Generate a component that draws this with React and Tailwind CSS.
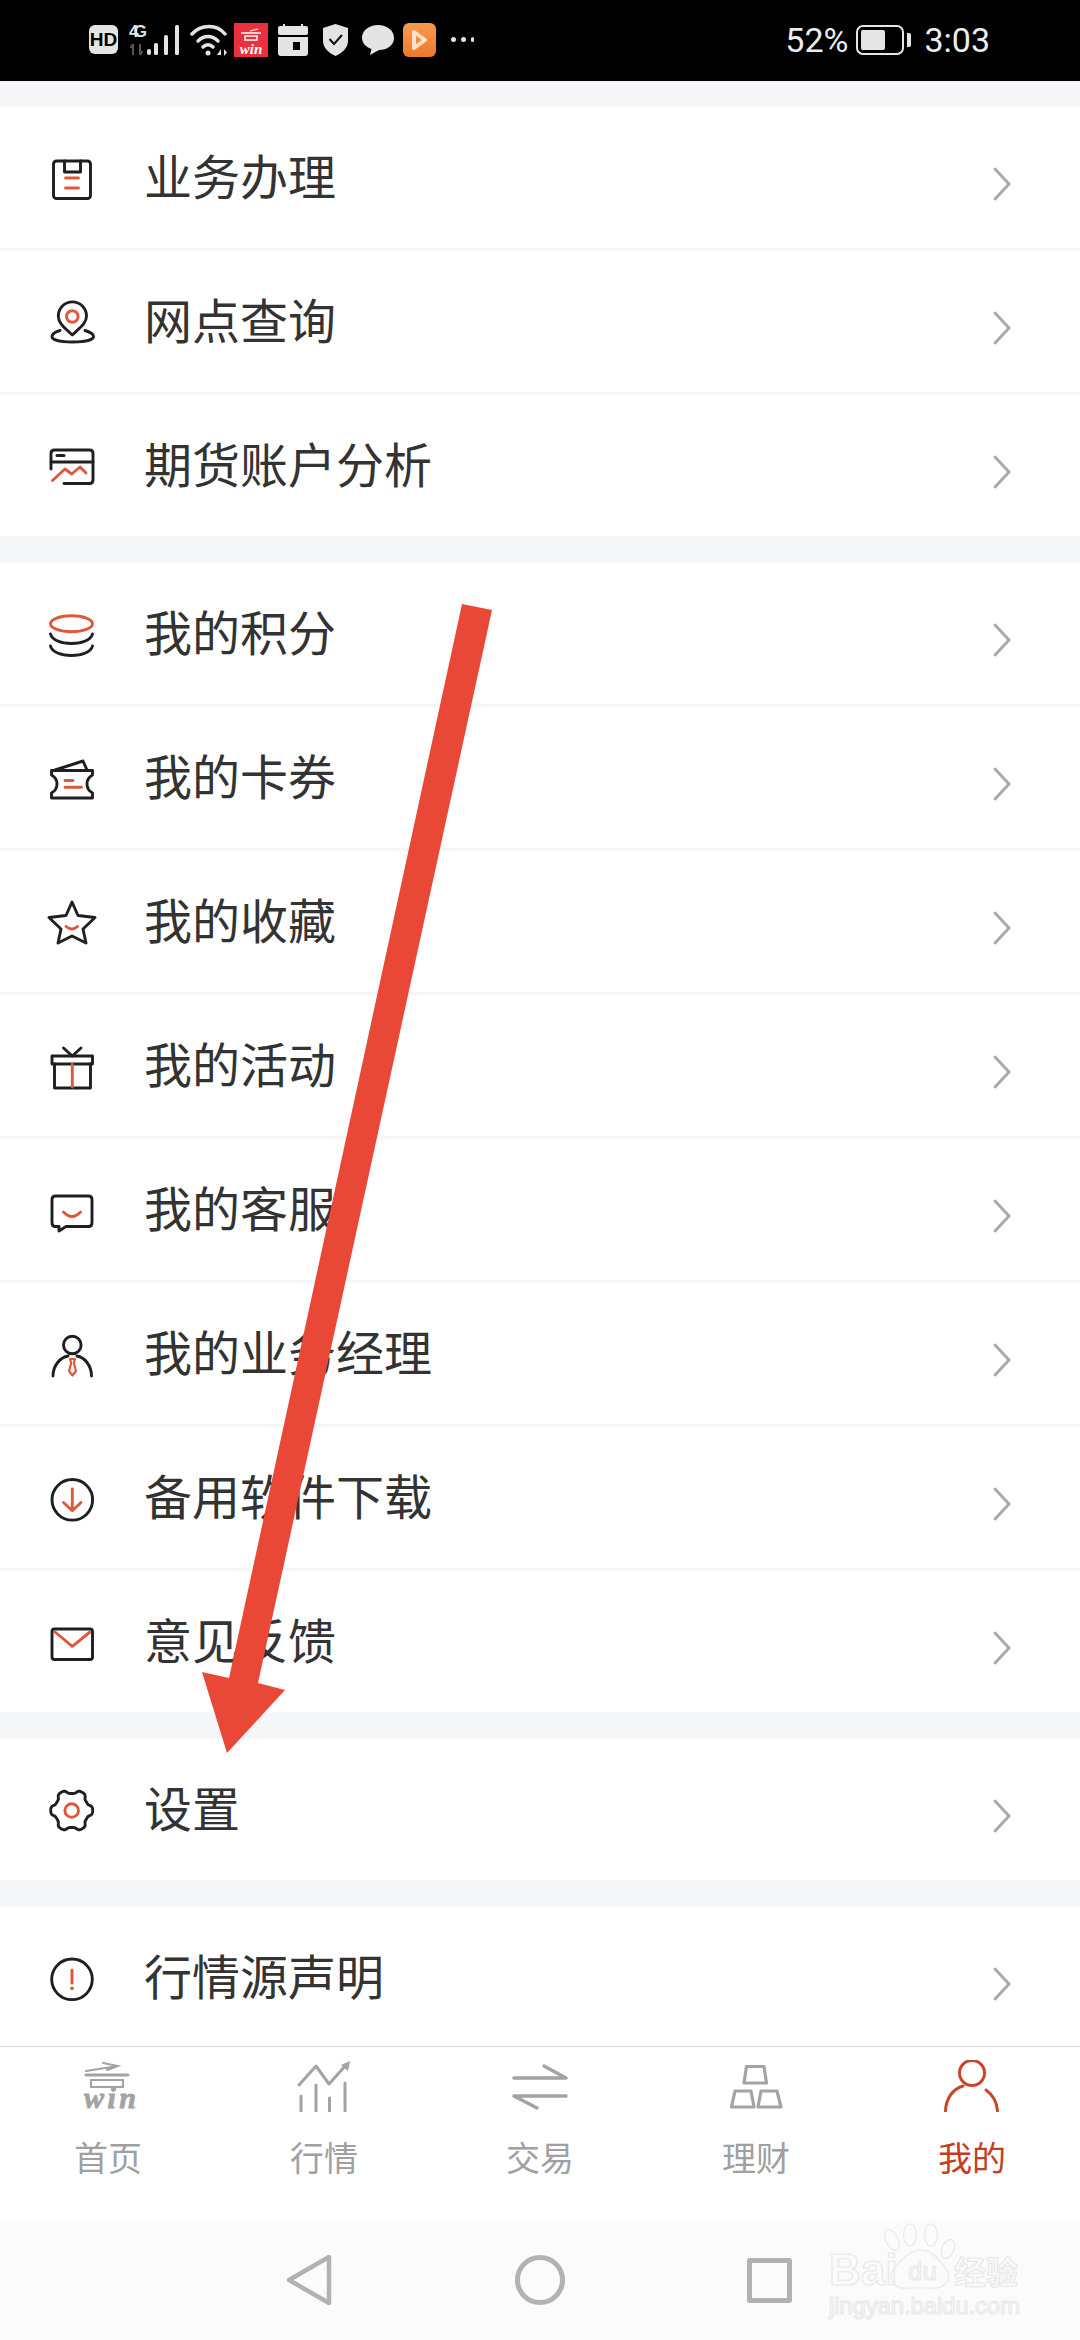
import React from 'react';

const INK = '#1f1f1f';
const RED = '#e0583c';

const Icon = ({ children }) => (
    <svg width="50" height="50" viewBox="0 0 50 50" fill="none" stroke={INK} strokeWidth="2.900" strokeLinecap="round" strokeLinejoin="round">
        {children}
    </svg>
);

// six squared-off teeth, notch at the top like the reference
const gearPath = (() => {
    const pts = [];
    for (let i = 0; i < 180; i++) {
        const t = (i / 180) * Math.PI * 2;
        const r = 19 + 2 * (Math.tanh(1.8 * Math.cos(6 * t)) / Math.tanh(1.8));
        pts.push(`${(24.7 + r * Math.cos(t)).toFixed(2)} ${(25.5 + r * Math.sin(t)).toFixed(2)}`);
    }
    return 'M' + pts.join('L') + 'Z';
})();

const icons = {
    clipboard: (
        <Icon>
            <rect x="6.500" y="8" width="37" height="37.500" rx="3" />
            <path d="M17.500 8v11h16V8" />
            <path d="M18.500 25h13M18.500 35h13" stroke={RED} />
        </Icon>
    ),
    pin: (
        <Icon>
            <path d="M25.300 38C18 31 11.300 26.500 11.300 19A14 14 0 0 1 39.500 19C39.500 26.500 32.500 31 25.300 38Z" />
            <circle cx="25.300" cy="19.500" r="5.800" stroke={RED} />
            <path d="M13 33.500C8 35 5 37 5 39.500C5 43 14 45 25.500 45C37 45 46.500 43 46.500 39.500C46.500 37 43 35 38 33.500" />
        </Icon>
    ),
    card: (
        <Icon>
            <path d="M4 28V12.500Q4 9 7.500 9H42.500Q46 9 46 12.500V39Q46 42.500 42.500 42.500H17" />
            <path d="M4 21H46" />
            <path d="M10 14.500H17" strokeWidth="3" />
            <path d="M5.500 39.500L18 28L24.700 33L33 26L39 32" stroke={RED} />
        </Icon>
    ),
    coins: (
        <Icon>
            <ellipse cx="24.500" cy="14.700" rx="21" ry="8" stroke={RED} />
            <path d="M3.500 25C5 31 14 34.500 24.500 34.500C35 34.500 44 31 45.500 25" />
            <path d="M3.500 37C5 43 14 46.500 24.500 46.500C35 46.500 44 43 45.500 37" />
        </Icon>
    ),
    ticket: (
        <Icon>
            <path d="M4.500 17.500H45.500V22Q40 25 40 31Q40 37 45.500 40V45H4.500V40Q10 37 10 31Q10 25 4.500 22Z" />
            <path d="M8 17L36 8L40 17" />
            <path d="M18 27.500H26M18 34.300H34.500" stroke={RED} />
        </Icon>
    ),
    star: (
        <Icon>
            <path d="M25 5L31 18.500L48 20.500L36 32L39 46L25 39L11 46L14 32L2 20.500L19 18.500Z" />
            <path d="M19 29.500Q25 34.500 30.500 29.500" stroke={RED} />
        </Icon>
    ),
    gift: (
        <Icon>
            <path d="M5 15H45.500V23H5Z" />
            <path d="M7.500 23V47H43.500V23" />
            <path d="M16.500 7L25.300 15L34 7" />
            <path d="M25.300 23V46" stroke={RED} />
        </Icon>
    ),
    chat: (
        <Icon>
            <path d="M8.500 11H41.500Q45 11 45 14.500V38Q45 41.500 41.500 41.500H19L12 46V41.500H8.500Q5 41.500 5 38V14.500Q5 11 8.500 11Z" />
            <path d="M16.500 27Q25 36 33.500 27" stroke={RED} />
        </Icon>
    ),
    manager: (
        <Icon>
            <circle cx="25.300" cy="16" r="8.800" />
            <path d="M6 47C6 36 14 28 21 27M44.500 47C44.500 36 37 28 30 27" />
            <path d="M23 30H28L26.800 34L29 42L25.500 46.500L22 42L24.200 34Z" stroke={RED} strokeWidth="2.200" />
        </Icon>
    ),
    download: (
        <Icon>
            <circle cx="25.300" cy="26.800" r="20.300" />
            <path d="M25.300 16V37.500M16.500 29.500L25.300 37.800L34 29.500" stroke={RED} />
        </Icon>
    ),
    mail: (
        <Icon>
            <rect x="5" y="12" width="40.500" height="30.500" rx="2.500" />
            <path d="M8 15L25.300 29.300L43 15" stroke={RED} />
        </Icon>
    ),
    gear: (
        <Icon>
            <path d={gearPath} />
            <circle cx="24.700" cy="25.500" r="6.800" stroke={RED} />
        </Icon>
    ),
    warn: (
        <Icon>
            <circle cx="25" cy="26.300" r="20.300" />
            <path d="M25 17V30" stroke={RED} strokeWidth="3" />
            <path d="M25 35.200V35.400" stroke={RED} strokeWidth="3.600" />
        </Icon>
    ),
};

const groups = [
    [
        { icon: 'clipboard', label: '业务办理' },
        { icon: 'pin', label: '网点查询' },
        { icon: 'card', label: '期货账户分析' },
    ],
    [
        { icon: 'coins', label: '我的积分' },
        { icon: 'ticket', label: '我的卡券' },
        { icon: 'star', label: '我的收藏' },
        { icon: 'gift', label: '我的活动' },
        { icon: 'chat', label: '我的客服' },
        { icon: 'manager', label: '我的业务经理' },
        { icon: 'download', label: '备用软件下载' },
        { icon: 'mail', label: '意见反馈' },
    ],
    [{ icon: 'gear', label: '设置' }],
    [{ icon: 'warn', label: '行情源声明' }],
];

const Row = ({ icon, label }) => (
    <div className="flex items-center h-[141px] bg-white pl-[47px]">
        <div className="w-[50px] h-[50px]">{icons[icon]}</div>
        <span className="ml-[47px] mb-[7px] text-[48px] leading-none text-[#333333]">{label}</span>
        <svg className="ml-auto mr-[68px] mt-[13px]" width="20" height="36" viewBox="0 0 20 36" fill="none" stroke="#a8a8a8" strokeWidth="3" strokeLinecap="round" strokeLinejoin="round">
            <path d="M3 3L17 18L3 33" />
        </svg>
    </div>
);

const TAB = '#a3a3a3';

const tabs = [
    {
        label: '首页',
        icon: (
            <svg width="56" height="52" viewBox="0 0 56 52" fill="none" stroke={TAB} strokeWidth="2.500" strokeLinecap="round" className="overflow-visible">
                <path d="M6 11L38 6M23 3L38 6L27 10" strokeWidth="2" />
                <path d="M6 15H48" strokeWidth="3" />
                <rect x="11" y="20" width="32" height="7" strokeWidth="2" />
                <text x="4" y="48" fontFamily="Liberation Serif, serif" fontStyle="italic" fontWeight="700" fontSize="30" fill={TAB} stroke={TAB} strokeWidth="0.800" textLength="52">win</text>
            </svg>
        ),
    },
    {
        label: '行情',
        icon: (
            <svg width="56" height="52" viewBox="0 0 56 52" fill="none" stroke={TAB} strokeWidth="3" strokeLinecap="round" strokeLinejoin="round">
                <path d="M3 25L20 6L33 24L50 5" />
                <path d="M54 1L52 11L45 5Z" fill={TAB} stroke="none" />
                <path d="M5 36V51M20 25V51M33.500 38V51M49 23V51" />
            </svg>
        ),
    },
    {
        label: '交易',
        icon: (
            <svg width="56" height="52" viewBox="0 0 56 52" fill="none" stroke={TAB} strokeWidth="3.500" strokeLinecap="round" strokeLinejoin="round">
                <path d="M2 18H54L32 6" />
                <path d="M54 36H2L25 48" />
            </svg>
        ),
    },
    {
        label: '理财',
        icon: (
            <svg width="56" height="52" viewBox="0 0 56 52" fill="none" stroke={TAB} strokeWidth="3.200" strokeLinecap="round" strokeLinejoin="round">
                <path d="M18.500 6.500H36L38.500 23H16Z" />
                <path d="M7 31H23L26 47H3.500Z" />
                <path d="M33 31H49L53 47H30Z" />
            </svg>
        ),
    },
    {
        label: '我的',
        active: true,
        icon: (
            <svg width="56" height="52" viewBox="0 0 56 52" fill="none" stroke="#c9452a" strokeWidth="3" strokeLinecap="round">
                <circle cx="28" cy="13" r="12.500" />
                <path d="M1.500 51C2 38 9 29 19 26M42 30C49 35 53 43 53.500 51" />
            </svg>
        ),
    },
];

const StatusLeft = () => (
    <div className="flex items-center h-[81px] pl-[89px] pb-[2px]">
        {/* HD */}
        <div className="flex items-center justify-center w-[29px] h-[29px] rounded-[6px] bg-[#e4e4e4] text-black text-[19px] font-bold leading-none font-['Liberation_Sans',sans-serif]">HD</div>
        {/* 4G signal */}
        <svg className="ml-[11px]" width="52" height="34" viewBox="0 0 52 34" fill="#e4e4e4">
            <text x="0" y="14" fontFamily="Liberation Sans, sans-serif" fontWeight="700" fontSize="17" textLength="18">4G</text>
            <path d="M4 32V21M4 21L1.500 25M11 21V32M11 32L13.500 28" stroke="#555555" strokeWidth="2" fill="none" />
            <rect x="18" y="26" width="4" height="6" rx="2" />
            <rect x="25" y="20" width="4" height="12" rx="1.500" />
            <rect x="35" y="12" width="4" height="20" rx="1.500" />
            <rect x="46" y="2" width="4" height="30" rx="1.500" />
        </svg>
        {/* wifi */}
        <svg className="ml-[9px]" width="38" height="34" viewBox="0 0 38 34" fill="none" stroke="#e4e4e4" strokeWidth="3.500" strokeLinecap="round">
            <path d="M2 11C11 1 27 1 35 11" />
            <path d="M8 18C14 12 22 12 28 18" />
            <path d="M13 24C16 21 20 21 23 24" />
            <circle cx="18" cy="30" r="2.500" fill="#e4e4e4" stroke="none" />
            <path d="M27 32L31 26V32ZM34 26V33L37 29.500Z" fill="#e4e4e4" stroke="none" />
        </svg>
        {/* app icon */}
        <div className="ml-[6px] w-[34px] h-[34px] bg-[#e8303f] flex flex-col items-center justify-end pb-[1px]">
            <svg width="26" height="15" viewBox="0 0 26 15" fill="none" stroke="#ffffff" strokeWidth="1.500">
                <path d="M3 6H23M7 9H19V13H7Z" />
                <path d="M12 4L20 2" stroke="#ffd0a0" />
            </svg>
            <span className="text-white text-[15px] leading-[14px] font-bold italic font-['Liberation_Serif',serif]">win</span>
        </div>
        {/* calendar */}
        <svg className="ml-[10px]" width="30" height="32" viewBox="0 0 30 32" fill="#e4e4e4">
            <rect x="0" y="2" width="30" height="9" rx="2" />
            <rect x="5" y="0" width="2" height="4" />
            <rect x="23" y="0" width="2" height="4" />
            <path d="M0 13H30V29Q30 32 27 32H3Q0 32 0 29ZM15 18V26H22V18Z" fillRule="evenodd" />
        </svg>
        {/* shield */}
        <svg className="ml-[15px]" width="25" height="32" viewBox="0 0 25 32" fill="#e4e4e4">
            <path d="M12.500 0L25 4V17C25 24 19 29 12.500 32C6 29 0 24 0 17V4Z" />
            <path d="M6.500 15L11 20L19 11" fill="none" stroke="#111111" strokeWidth="2" />
        </svg>
        {/* bubble */}
        <svg className="ml-[14px]" width="32" height="30" viewBox="0 0 32 30" fill="#e4e4e4">
            <path d="M16 0C25 0 32 5.500 32 13C32 20.500 25 25 17 25L8 30L9.500 24C4 22 0 18 0 13C0 5.500 7 0 16 0Z" />
        </svg>
        {/* player */}
        <div className="ml-[9px] w-[33px] h-[34px] rounded-[6px] bg-gradient-to-b from-[#f79a4e] to-[#ec7a28] flex items-center justify-center">
            <svg width="18" height="22" viewBox="0 0 18 22" fill="none" stroke="#fde0c8" strokeWidth="4" strokeLinejoin="round">
                <path d="M3 3L14 11L3 19Z" />
            </svg>
        </div>
        {/* dots */}
        <div className="ml-[15px] flex items-center gap-[5px]">
            <div className="w-[5px] h-[5px] rounded-full bg-[#e4e4e4]" />
            <div className="w-[5px] h-[5px] rounded-full bg-[#e4e4e4]" />
            <div className="w-[3px] h-[5px] rounded-full bg-[#e4e4e4]" />
        </div>
    </div>
);

const StatusRight = () => (
    <div className="flex items-center h-[81px] pr-[90px] pb-[2px] text-[#ececec] text-[34px] font-normal leading-none font-['Roboto',sans-serif]">
        <span>52%</span>
        <div className="ml-[8px] w-[48px] h-[30px] rounded-[7px] border-2 border-[#e6e6e6] p-[3px]">
            <div className="w-[24px] h-full rounded-[2px] bg-[#e6e6e6]" />
        </div>
        <div className="ml-[3px] w-[4px] h-[14px] rounded-r-[2px] bg-[#e6e6e6]" />
        <span className="ml-[13px]">3:03</span>
    </div>
);

export default function App() {
    return (
        <div className="relative w-[1080px] h-[2340px] overflow-hidden flex flex-col bg-[#f5f6f8] font-['Noto_Sans_CJK_SC',sans-serif]">
            <div className="flex justify-between h-[81px] bg-black">
                <StatusLeft />
                <StatusRight />
            </div>

            <div className="flex-1 flex flex-col gap-[27px] pt-[26px] overflow-hidden">
                {groups.map((group, i) => (
                    <div key={i} className="flex flex-col gap-[3px] shrink-0">
                        {group.map((item) => (
                            <Row key={item.label} {...item} />
                        ))}
                    </div>
                ))}
            </div>

            {/* Tab bar */}
            <div className="flex h-[174px] shrink-0 bg-white border-t border-[#d8d8d8]">
                {tabs.map((tab) => (
                    <div key={tab.label} className="flex-1 flex flex-col items-center pt-[13px]">
                        <div className="h-[52px]">{tab.icon}</div>
                        <span className={`mt-[25px] text-[34px] leading-[40px] ${tab.active ? 'text-[#c63d1f]' : 'text-[#a0a0a0]'}`}>{tab.label}</span>
                    </div>
                ))}
            </div>

            {/* System nav */}
            <div className="flex items-center h-[120px] shrink-0 bg-[#fbfbfb] pl-[286px]">
                <svg width="46" height="52" viewBox="0 0 46 52" fill="none" stroke="#b2b2b2" strokeWidth="4.500" strokeLinejoin="round">
                    <path d="M3 26L43 3V49Z" />
                </svg>
                <div className="ml-[183px] w-[50px] h-[50px] rounded-full border-[5px] border-[#b2b2b2]" />
                <div className="ml-[182px] w-[45px] h-[45px] rounded-[3px] border-[5px] border-[#b2b2b2]" />
            </div>

            {/* Watermark */}
            <svg className="absolute left-[825px] top-[2222px]" width="200" height="100" viewBox="0 0 200 100" fill="none" stroke="#e9e9e9" strokeWidth="1.200">
                <ellipse cx="67" cy="18" rx="6" ry="11" transform="rotate(-25 67 18)" />
                <ellipse cx="85" cy="13" rx="6.500" ry="11" />
                <ellipse cx="106" cy="13" rx="6.500" ry="11" />
                <ellipse cx="123" cy="27" rx="6" ry="10" transform="rotate(25 123 27)" />
                <path d="M96 28C108 28 116 40 122 48C128 60 116 68 106 66H84C72 68 62 60 68 48C74 40 84 28 96 28Z" />
                <text x="4" y="63" fontFamily="Liberation Sans, sans-serif" fontWeight="700" fontSize="44">Bai</text>
                <text x="83" y="58" fontFamily="Liberation Sans, sans-serif" fontSize="26">du</text>
                <text x="129" y="62" fontFamily="Noto Sans CJK SC, sans-serif" fontWeight="700" fontSize="32">经验</text>
                <text x="4" y="92" fontFamily="Liberation Sans, sans-serif" fontSize="24" textLength="191">jingyan.baidu.com</text>
            </svg>

            {/* Annotation arrow */}
            <svg className="absolute left-0 top-0 pointer-events-none" width="1080" height="2340" viewBox="0 0 1080 2340">
                <polygon points="462,604 492,610 258,1683 285,1690 227,1753 202,1672 229,1678" fill="#e94837" />
            </svg>
        </div>
    );
}
